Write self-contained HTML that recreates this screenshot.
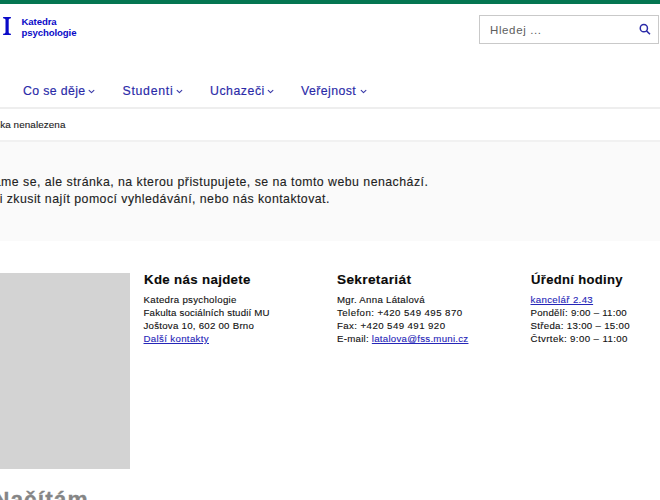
<!DOCTYPE html>
<html lang="cs">
<head>
<meta charset="utf-8">
<title>Stránka nenalezena</title>
<style>
html,body{margin:0;padding:0;}
body{width:660px;height:500px;overflow:hidden;position:relative;background:#fff;font-family:"Liberation Sans",sans-serif;color:#222;}
.t{position:absolute;white-space:nowrap;line-height:0;}
.bar{position:absolute;left:0;top:0;width:660px;height:4px;background:#057651;}
.logoT{font-weight:bold;color:#0a0ac8;font-size:9.6px;letter-spacing:-0.1px;}
.search{position:absolute;left:479px;top:15px;width:178px;height:27px;border:1px solid #c9c9c9;background:#fff;}
.nav{color:#2a2aa8;font-size:12.3px;-webkit-text-stroke:0.15px #2a2aa8;}
.hr{position:absolute;left:0;top:107px;width:660px;height:2px;background:#eeeeee;}
.panel{position:absolute;left:0;top:140px;width:660px;height:99px;background:#fafafa;border-top:2px solid #f1f1f1;}
.main{font-size:12.34px;color:#222;-webkit-text-stroke:0.12px #222;}
.map{position:absolute;left:0;top:273px;width:130px;height:196px;background:#d3d3d3;}
.h{font-weight:bold;font-size:12.2px;color:#0a0a0a;letter-spacing:0.3px;transform-origin:0 0;-webkit-text-stroke:0.12px #0a0a0a;}
.f{font-size:9.7px;color:#111;-webkit-text-stroke:0.12px #111;}
a{color:#2626b8;text-decoration:underline;-webkit-text-stroke-color:#2626b8;}
.load{font-weight:bold;font-size:21.3px;color:#858585;transform-origin:0 0;-webkit-text-stroke:0.3px #858585;}
</style>
</head>
<body>
<div class="bar"></div>
<svg style="position:absolute;left:0;top:0;" width="14" height="40" viewBox="0 0 14 40"><path d="M3.1 17 H10.9 V18.2 Q8.9 18.4 8.7 19.6 V32.4 Q8.9 33.6 10.9 33.8 V35 H3.1 V33.8 Q5.1 33.6 5.5 32.4 V19.6 Q5.1 18.4 3.1 18.2 Z" fill="#0a0ac8"/></svg>
<div class="t logoT" style="left:21.5px;top:21.6px;">Katedra</div>
<div class="t logoT" style="left:21.5px;top:32.7px;">psychologie</div>

<div class="search"></div>
<div class="t" style="left:490px;top:29.6px;font-size:11.5px;color:#5e5e5e;letter-spacing:0.62px;">Hledej ...</div>
<svg style="position:absolute;left:638px;top:23px;" width="14" height="14" viewBox="0 0 14 14"><circle cx="5.85" cy="5.2" r="3.6" fill="none" stroke="#2b2ba8" stroke-width="1.5"/><line x1="8.5" y1="7.9" x2="12" y2="11.3" stroke="#2b2ba8" stroke-width="1.5"/></svg>

<div class="t nav" style="left:23px;top:90.6px;letter-spacing:0.37px;">Co se děje</div>
<div class="t nav" style="left:122.5px;top:90.6px;letter-spacing:0.72px;">Studenti</div>
<div class="t nav" style="left:210px;top:90.6px;letter-spacing:0.54px;">Uchazeči</div>
<div class="t nav" style="left:301px;top:90.6px;letter-spacing:0.44px;">Veřejnost</div>
<svg style="position:absolute;left:0;top:80px;" width="400" height="20" viewBox="0 80 400 20"><g fill="none" stroke="#3a3aa8" stroke-width="1.1" stroke-linecap="round" stroke-linejoin="round"><polyline points="89.1,90.3 91.5,92.6 93.9,90.3"/><polyline points="177.1,90.4 179.4,92.7 181.8,90.4"/><polyline points="268.2,90.4 270.5,92.7 272.9,90.4"/><polyline points="361.2,90.4 363.5,92.7 365.9,90.4"/></g></svg>
<div class="hr"></div>

<div class="t" style="left:-23.8px;top:125px;font-size:9.9px;color:#1a1a1a;letter-spacing:0.08px;-webkit-text-stroke:0.12px #1a1a1a;">Stránka nenalezena</div>

<div class="panel"></div>
<div class="t main" style="left:-51.5px;top:182px;letter-spacing:0.467px;">Omlouváme se, ale stránka, na kterou přistupujete, se na tomto webu nenachází.</div>
<div class="t main" style="left:-50.5px;top:198.7px;letter-spacing:0.45px;">Můžete ji zkusit najít pomocí vyhledávání, nebo nás kontaktovat.</div>

<div class="map"></div>
<div class="t h" style="left:144px;top:280.4px;transform:scaleX(1.09);">Kde nás najdete</div>
<div class="t f" style="left:143.5px;top:299.5px;letter-spacing:0.284px;">Katedra psychologie</div>
<div class="t f" style="left:143.5px;top:312.5px;letter-spacing:0.181px;">Fakulta sociálních studií MU</div>
<div class="t f" style="left:143.5px;top:325.9px;letter-spacing:0.243px;">Joštova 10, 602 00 Brno</div>
<div class="t f" style="left:143.5px;top:338.9px;letter-spacing:0.332px;"><a>Další kontakty</a></div>

<div class="t h" style="left:336.8px;top:280.4px;transform:scaleX(1.12);">Sekretariát</div>
<div class="t f" style="left:337px;top:299.5px;letter-spacing:0.272px;">Mgr. Anna Látalová</div>
<div class="t f" style="left:337px;top:312.5px;letter-spacing:0.421px;">Telefon: +420 549 495 870</div>
<div class="t f" style="left:337px;top:325.9px;letter-spacing:0.405px;">Fax: +420 549 491 920</div>
<div class="t f" style="left:337px;top:338.9px;letter-spacing:0.248px;">E-mail: <a>latalova@fss.muni.cz</a></div>

<div class="t h" style="left:531px;top:280.4px;transform:scaleX(1.07);">Úřední hodiny</div>
<div class="t f" style="left:530.5px;top:299.5px;letter-spacing:0.341px;"><a>kancelář 2.43</a></div>
<div class="t f" style="left:530.5px;top:312.5px;letter-spacing:0.239px;">Pondělí: 9:00 – 11:00</div>
<div class="t f" style="left:530.5px;top:325.9px;letter-spacing:0.294px;">Středa: 13:00 – 15:00</div>
<div class="t f" style="left:530.5px;top:338.9px;letter-spacing:0.389px;">Čtvrtek: 9:00 – 11:00</div>

<div class="t load" style="left:-7px;top:500px;letter-spacing:1px;transform:scaleX(1.065);">Načítám</div>
</body>
</html>
